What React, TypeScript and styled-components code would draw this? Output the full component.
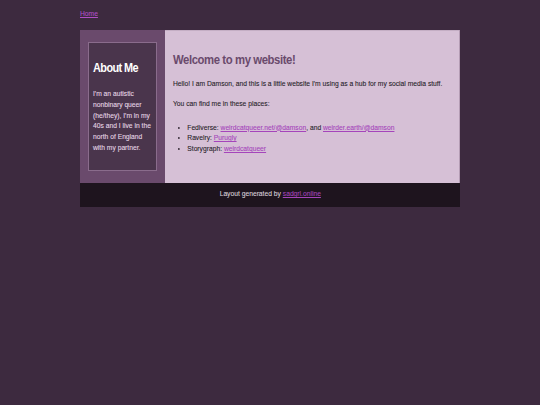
import React from "react";
import styled, { createGlobalStyle } from "styled-components";

// no narrow face is installed, so Liberation Sans gets squeezed to Arial Narrow proportions
const NARROW = 0.84;

const GlobalStyle = createGlobalStyle`
  html, body {
    margin: 0;
    padding: 0;
  }

  body {
    background-color: #3d2a3f;
    font-family: "Liberation Sans", Arial, sans-serif;
    font-size: 8px;
    line-height: 10.8px;
    color: #261c27;
  }
`;

const Page = styled.div`
  width: 380px;
  margin: 0 auto;
`;

// the squeeze thins vertical strokes, a hairline stroke puts some weight back
const Narrow = styled.div`
  width: calc(100% / ${NARROW});
  transform: scaleX(${NARROW});
  transform-origin: left top;
  -webkit-text-stroke: 0.1px currentColor;
`;

const NarrowInline = styled.span<{ $origin?: string }>`
  display: inline-block;
  transform: scaleX(${NARROW});
  transform-origin: ${({ $origin }) => $origin ?? "left"} center;
  -webkit-text-stroke: 0.1px currentColor;
`;

const Nav = styled.nav`
  box-sizing: border-box;
  height: 30px;
  padding-top: 8.5px;
`;

const Link = styled.a`
  color: #a545bb;
  text-decoration: underline;
`;

const NavLink = styled(Link)`
  color: #b04fc6;
`;

const Columns = styled.div`
  display: flex;
  align-items: stretch;
`;

const Sidebar = styled.aside`
  width: 85px;
  flex-shrink: 0;
  box-sizing: border-box;
  padding: 12px 8px;
  background-color: #6a4a6c;
`;

const SideBox = styled.div`
  padding: 17px 4px 16px;
  background-color: #4a354c;
  border: 1px solid #8a6c8c;
  color: #e6d8e6;
`;

const SideTitle = styled.h2`
  margin: 0 0 13px;
  font-size: 13px;
  line-height: 16px;
  letter-spacing: -0.7px;
  font-weight: bold;
  color: #ffffff;
  -webkit-text-stroke: 0;
`;

const SideText = styled.p`
  margin: 0;
`;

const Main = styled.main`
  flex: 1;
  min-width: 0;
  padding: 22px 8px 12px;
  background-color: #d6c0d6;
  box-shadow: inset -1px 0 0 #b49cb4, inset 0 1px 0 #c4aec4;
`;

const Heading = styled.h1`
  margin: 0 0 11px;
  font-size: 13.5px;
  line-height: 16px;
  letter-spacing: -0.5px;
  font-weight: bold;
  color: #6a4a6c;
  -webkit-text-stroke: 0;
`;

const Paragraph = styled.p`
  margin: 0 0 9.5px;
`;

const PlaceList = styled.ul`
  margin: 12.5px 0 0;
  padding-left: 17px;
`;

const Footer = styled.footer`
  height: 24px;
  display: flex;
  align-items: center;
  justify-content: center;
  background-color: #1e141e;
  color: #dcd2dc;
`;

export default function App() {
  return (
    <>
      <GlobalStyle />
      <Page>
        <Nav>
          <NarrowInline>
            <NavLink href="#">Home</NavLink>
          </NarrowInline>
        </Nav>
        <Columns>
          <Sidebar>
            <SideBox>
              <Narrow>
                <SideTitle>About Me</SideTitle>
                <SideText>
                  I'm an autistic nonbinary queer (he/they), I'm in my 40s and I
                  live in the north of England with my partner.
                </SideText>
              </Narrow>
            </SideBox>
          </Sidebar>
          <Main>
            <Narrow>
              <Heading>Welcome to my website!</Heading>
              <Paragraph>
                Hello! I am Damson, and this is a little website I'm using as a
                hub for my social media stuff.
              </Paragraph>
              <Paragraph>You can find me in these places:</Paragraph>
              <PlaceList>
                <li>
                  Fediverse: <Link href="#">weirdcatqueer.net/@damson</Link>, and{" "}
                  <Link href="#">weirder.earth/@damson</Link>
                </li>
                <li>
                  Ravelry: <Link href="#">Purugly</Link>
                </li>
                <li>
                  Storygraph: <Link href="#">weirdcatqueer</Link>
                </li>
              </PlaceList>
            </Narrow>
          </Main>
        </Columns>
        <Footer>
          <NarrowInline $origin="center">
            Layout generated by <Link href="#">sadgrl.online</Link>
          </NarrowInline>
        </Footer>
      </Page>
    </>
  );
}
